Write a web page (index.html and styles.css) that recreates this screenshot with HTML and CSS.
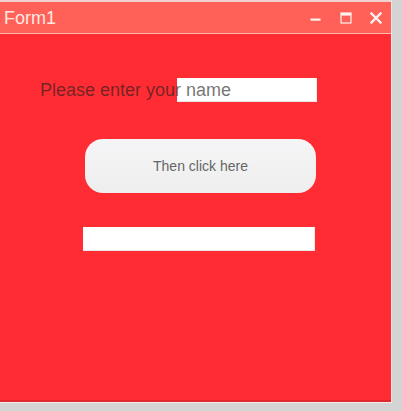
FILE: index.html
```html
<!DOCTYPE html>
<html>
<head>
<meta charset="utf-8">
<link rel="stylesheet" href="styles.css">
</head>
<body>
<div class="window">
  <div class="titlebar">
    <span class="title">Form1</span>
    <div class="controls">
      <svg class="ctl" width="12" height="12" viewBox="0 0 12 12"><rect x="0.5" y="6.5" width="10" height="2.2" fill="#fff2ee"/></svg>
      <svg class="ctl" width="12" height="12" viewBox="0 0 12 12"><rect x="1" y="1" width="10" height="10" fill="none" stroke="#fff2ee" stroke-width="1.2"/><rect x="1" y="1" width="10" height="2.6" fill="#fff2ee"/></svg>
      <svg class="ctl" width="12" height="12" viewBox="0 0 12 12"><path d="M1.5 1.5 L10.5 10.5 M10.5 1.5 L1.5 10.5" stroke="#fff2ee" stroke-width="2.4" stroke-linecap="square"/></svg>
    </div>
  </div>
  <div class="client">
    <div class="name-row">
      <label class="prompt" for="nm">Please enter your name</label>
      <input id="nm" class="field name-field" type="text">
    </div>
    <button class="action">Then click here</button>
    <input class="field result-field" type="text">
  </div>
</div>
</body>
</html>
```
FILE: styles.css
```css
html, body {
  margin: 0;
  padding: 0;
}
body {
  background: #d4d4d4;
  width: 402px;
  height: 411px;
  font-family: "Liberation Sans", Arial, sans-serif;
  overflow: hidden;
}
.window {
  width: 391px;
  border-right: 1px solid #f6e2e2;
  border-bottom: 1px solid #f2ecec;
  display: flex;
  flex-direction: column;
}
.titlebar {
  height: 31px;
  border-top: 2px solid #f1d2d0;
  border-bottom: 1px solid #ffb4ae;
  background: #ff6159;
  display: flex;
  align-items: center;
  justify-content: space-between;
  padding: 0 9px 0 4px;
}
.title {
  color: #fde9e2;
  font-size: 18px;
  padding-top: 2px;
}
.controls {
  display: flex;
  align-items: center;
  gap: 18px;
  padding-top: 1px;
}
.ctl {
  display: block;
}
.client {
  background: #ff2d33;
  height: 368px;
  border-bottom: 2px solid #e0292f;
  display: flex;
  flex-direction: column;
  align-items: flex-start;
  box-sizing: border-box;
  padding-top: 44px;
}
.name-row {
  display: grid;
  grid-template-columns: 137px 140px;
  margin-left: 40px;
}
.prompt {
  grid-column: 1 / 3;
  grid-row: 1;
  align-self: center;
  z-index: 1;
  font-size: 18px;
  color: rgba(30, 30, 30, 0.64);
  white-space: nowrap;
  pointer-events: none;
}
.field {
  box-sizing: border-box;
  height: 24px;
  margin: 0;
  padding: 0;
  background: #ffffff;
  border: none;
  border-bottom: 1px solid #e6e6e6;
  border-right: 1px solid #ececec;
  outline: none;
}
.name-field {
  grid-column: 2;
  grid-row: 1;
  width: 140px;
}
.action {
  margin: 37px 0 0 85px;
  width: 231px;
  height: 54px;
  border: none;
  border-radius: 18px;
  background: linear-gradient(#f5f5f7, #eeeeee);
  color: #666666;
  font-family: "Liberation Sans", Arial, sans-serif;
  font-size: 14px;
  padding: 0 0 1px 0;
}
.result-field {
  margin: 34px 0 0 83px;
  width: 232px;
}
```
